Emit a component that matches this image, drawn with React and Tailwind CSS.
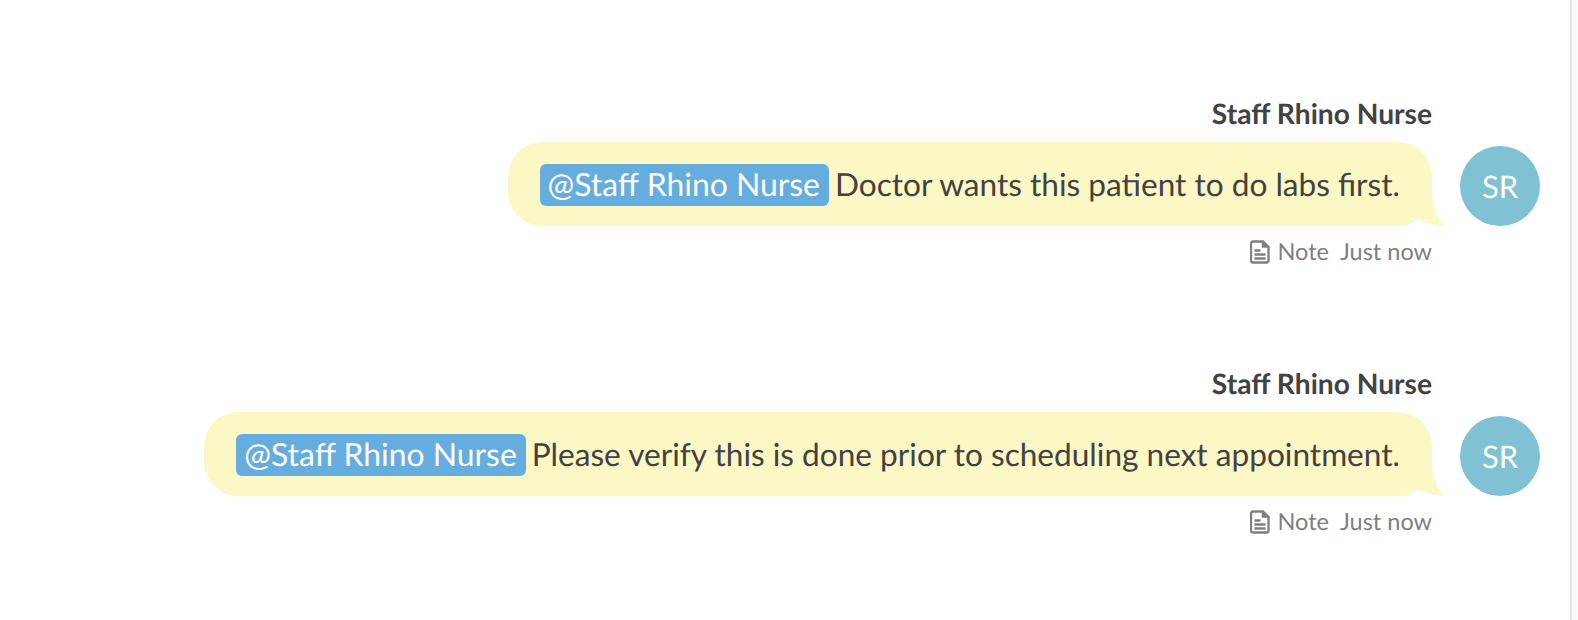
function NoteIcon() {
  return (
    <svg width="20" height="24" viewBox="0 0 20 24" fill="none" stroke="#7f7f7f" strokeWidth="2.3" className="shrink-0">
      <path d="M3 1.5h10l5.5 5.5v13.5a2 2 0 0 1-2 2H3a2 2 0 0 1-2-2v-17a2 2 0 0 1 2-2z" />
      <path d="M12.5 2v5h6z" fill="#7f7f7f" strokeWidth="1.5" />
      <path d="M4.5 10.5h6M4.5 14.5h11M4.5 18.5h11" />
    </svg>
  );
}

function Message({ text }) {
  return (
    <div className="flex justify-end items-end pr-[30px]">
      <div className="flex flex-col items-end">
        <div className="text-[28.2px] leading-[30px] font-bold text-[#424242] mb-[13px] [text-rendering:geometricPrecision]">Staff Rhino Nurse</div>
        <div className="relative h-[84px] flex items-center rounded-[34px] bg-[#fcf8c5] pl-[32px] pr-[32px] pt-[2px] text-[31.6px] text-[#424242] whitespace-nowrap [text-rendering:geometricPrecision]">
          <span className="h-[42px] flex items-center rounded-[6px] bg-[#66addf] pl-[8px] pr-[9px] text-white text-[31.9px] mr-[6px]">@Staff Rhino Nurse</span>
          <span>{text}</span>
          <svg className="absolute right-[-14px] bottom-0" width="48" height="50" viewBox="0 0 48 50">
            <path d="M33 0 C33 25 37 44 48 50 C38 50 28 47 19 43 C14 47 8 50 0 50 L0 0 Z" fill="#fcf8c5" />
          </svg>
        </div>
        <div className="flex items-center mt-[12px] text-[23.5px] leading-[28px] text-[#7f7f7f] [text-rendering:geometricPrecision]">
          <NoteIcon />
          <span className="ml-[7px]">Note</span>
          <span className="ml-[11px]">Just now</span>
        </div>
      </div>
      <div className="ml-[28px] mb-[40px] w-[80px] h-[80px] rounded-full bg-[#80c1d4] flex items-center justify-center text-white text-[31px] [text-rendering:geometricPrecision]">SR</div>
    </div>
  );
}

export default function App() {
  return (
    <div className="flex h-[620px] w-[1578px] bg-white overflow-hidden" style={{ fontFamily: "Lato, sans-serif" }}>
      <main className="flex-1 pt-[99px] flex flex-col gap-[103px]">
        <Message text="Doctor wants this patient to do labs first." />
        <Message text="Please verify this is done prior to scheduling next appointment." />
      </main>
      <div className="w-[8px] border-l-2 border-[#e6e6e6] bg-[#fafafa]" />
    </div>
  );
}
